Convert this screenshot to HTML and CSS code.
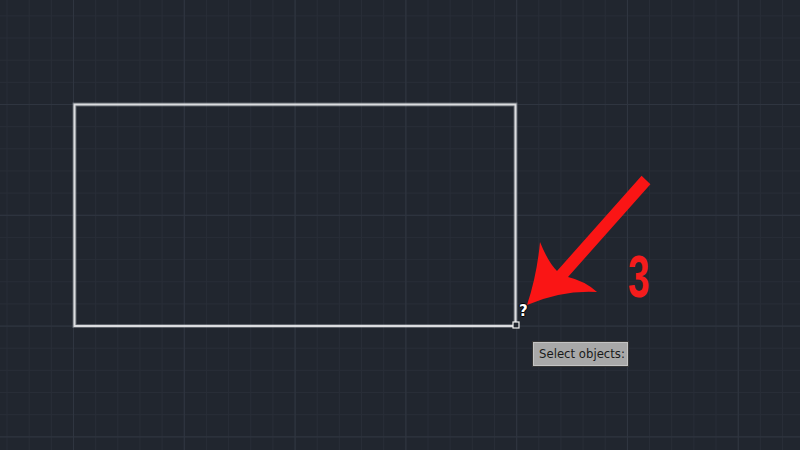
FILE: index.html
```html
<!DOCTYPE html>
<html lang="en">
<head>
<meta charset="utf-8">
<title>Drawing</title>
<link rel="stylesheet" href="styles.css">
</head>
<body>
<main class="viewport">
  <svg class="drawing" width="800" height="450" viewBox="0 0 800 450" aria-hidden="true">
    <!-- rectangle on the model space -->
    <rect class="shape-glow" x="74.5" y="104.5" width="441" height="221.5"/>
    <rect class="shape" x="74.5" y="104.5" width="441" height="221.5"/>
    <!-- pickbox at the cursor -->
    <rect class="pickbox" x="513" y="322" width="6" height="6"/>
    <!-- annotation arrow -->
    <path class="arrow" d="M641.6 175.8 L650.4 184.2 L568 277 Q585 281 597 292 Q562 290 527 305 Q537 275 540 242 Q548 262 557 271 Z"/>
  </svg>
  <span class="cursor-query">?</span>
  <span class="step-number">3</span>
  <div class="tooltip">Select objects:</div>
</main>
</body>
</html>
```

FILE: styles.css
```css
html, body {
  margin: 0;
  padding: 0;
  background: #21262f;
}

.viewport {
  position: relative;
  width: 800px;
  height: 450px;
  overflow: hidden;
  background-color: #21262f;
  /* major grid lines every 5 cells, minor lines every cell */
  background-image:
    linear-gradient(to right, #2f3540 1px, transparent 1px),
    linear-gradient(to bottom, #2f3540 1px, transparent 1px),
    linear-gradient(to right, #282d37 1px, transparent 1px),
    linear-gradient(to bottom, #282d37 1px, transparent 1px);
  background-size: 110.8px 110.8px, 110.8px 110.8px, 22.16px 22.16px, 22.16px 22.16px;
  background-position: 73px 104px, 73px 104px, 73px 104px, 73px 104px;
}

.drawing {
  position: absolute;
  left: 0;
  top: 0;
  display: block;
}

.shape {
  fill: none;
  stroke: #dcdde0;
  stroke-width: 2;
}

.shape-glow {
  fill: none;
  stroke: rgba(200, 205, 212, 0.35);
  stroke-width: 4;
}

.pickbox {
  fill: #21262f;
  stroke: #f2f2f2;
  stroke-width: 1.2;
}

.arrow {
  fill: #fa1515;
  stroke: none;
}

.cursor-query {
  position: absolute;
  left: 519px;
  top: 302px;
  font-family: "DejaVu Sans", sans-serif;
  font-weight: bold;
  font-size: 15px;
  line-height: 18px;
  color: #ffffff;
  text-shadow: -1px 0 #000, 1px 0 #000, 0 -1px #000, 0 1px #000;
}

.step-number {
  position: absolute;
  left: 628px;
  top: 248px;
  font-family: "Liberation Sans", Arial, sans-serif;
  font-weight: bold;
  font-size: 59px;
  line-height: 58px;
  color: #f51c1c;
  transform: scaleX(0.66);
  transform-origin: left top;
}

.tooltip {
  position: absolute;
  left: 533px;
  top: 342px;
  width: 95px;
  height: 24px;
  box-sizing: border-box;
  padding: 0 0 0 5px;
  background: #a8a8a8;
  border: 1px solid #c4c4c4;
  outline: 1px solid #353535;
  font-family: "DejaVu Sans Condensed", "DejaVu Sans", sans-serif;
  font-size: 13px;
  line-height: 22px;
  color: #1a1a1a;
  white-space: nowrap;
}
```
